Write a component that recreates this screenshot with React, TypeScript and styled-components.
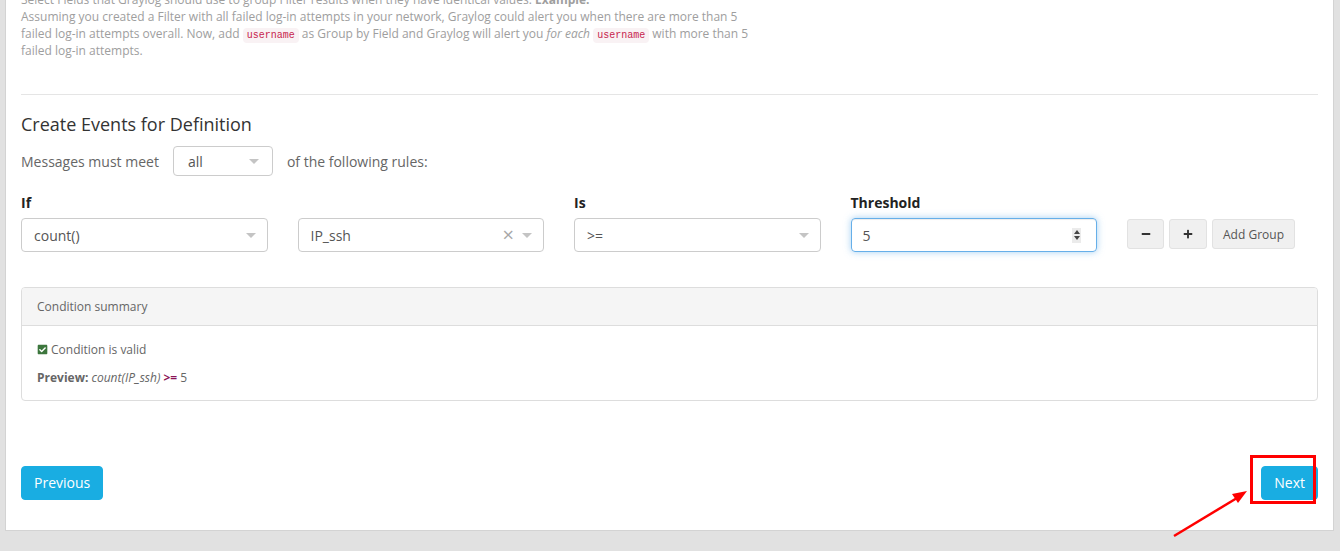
import React from "react";
import styled, { createGlobalStyle } from "styled-components";
import { FaMinus, FaPlus, FaCheckSquare } from "react-icons/fa";

const GlobalStyle = createGlobalStyle`
  html, body { margin: 0; padding: 0; }
  body {
    background: #e1e1e1;
    font-family: "Open Sans", "DejaVu Sans", sans-serif;
    overflow: hidden;
  }
`;

const Page = styled.div`
  padding: 0 6px 20px 5px;
`;

const Panel = styled.div`
  display: flex;
  flex-direction: column;
  background: #fff;
  border: 1px solid #d3d3d3;
  border-top: none;
  padding: 0 15px 30px;
`;

const HelpText = styled.p`
  margin: -9px 0 0;
  width: 745px;
  font-size: 12px;
  line-height: 17px;
  color: #9e9e9e;
`;

const Code = styled.code`
  font-family: "Liberation Mono", "DejaVu Sans Mono", monospace;
  font-size: 10px;
  line-height: 1;
  color: #c7254e;
  background: #f9f2f4;
  padding: 2px 4px;
  border-radius: 4px;
`;

const Divider = styled.div`
  margin-top: 35px;
  border-top: 1px solid #e5e5e5;
`;

const Heading = styled.h3`
  margin: 19px 0 0;
  font-size: 18px;
  font-weight: 400;
  line-height: 20px;
  color: #333;
`;

const MessagesRow = styled.div`
  display: flex;
  align-items: center;
  gap: 14px;
  margin-top: 12px;
  height: 30px;
  font-size: 14px;
  color: #666;
`;

const SmallSelect = styled.div`
  box-sizing: border-box;
  width: 100px;
  height: 30px;
  border: 1px solid #ccc;
  border-radius: 4px;
  padding: 0 13px 0 14px;
  display: flex;
  align-items: center;
  justify-content: space-between;
  font-size: 14px;
  color: #555;
`;

const Caret = styled.span`
  width: 0;
  height: 0;
  border-top: 5px solid #c4c4c4;
  border-left: 5px solid transparent;
  border-right: 5px solid transparent;
`;

const FieldsGrid = styled.div`
  display: grid;
  grid-template-columns: repeat(4, 246.5px) auto;
  column-gap: 30px;
  margin-top: 17px;
`;

const Field = styled.div`
  display: flex;
  flex-direction: column;
`;

const Label = styled.label`
  height: 20px;
  line-height: 20px;
  margin-bottom: 5px;
  font-size: 14px;
  font-weight: 700;
  color: #222;
`;

const SelectBox = styled.div`
  box-sizing: border-box;
  height: 34px;
  border: 1px solid #ccc;
  border-radius: 4px;
  padding: 0 11px 0 12px;
  display: flex;
  align-items: center;
  justify-content: space-between;
  font-size: 14px;
  color: #555;
`;

const Indicators = styled.div`
  display: flex;
  align-items: center;
  gap: 8px;
`;

const Clear = styled.span`
  font-size: 20px;
  line-height: 18px;
  color: #a8a8a8;
`;

const NumberInput = styled.div`
  box-sizing: border-box;
  height: 34px;
  border: 1px solid #66afe9;
  border-radius: 4px;
  box-shadow: inset 0 1px 1px rgba(0, 0, 0, 0.075), 0 0 7px rgba(102, 175, 233, 0.6);
  padding: 0 15px 0 11px;
  display: flex;
  align-items: center;
  justify-content: space-between;
  font-size: 14px;
  color: #555;
`;

const Spinner = styled.span`
  width: 9px;
  height: 15px;
  background: #ebebeb;
  display: flex;
  flex-direction: column;
  align-items: center;
  justify-content: center;
  gap: 2px;
`;

const SpinArrow = styled.span<{ $up?: boolean }>`
  width: 0;
  height: 0;
  border-left: 3.5px solid transparent;
  border-right: 3.5px solid transparent;
  ${(p) => (p.$up ? "border-bottom: 4px solid #444;" : "border-top: 4px solid #444;")}
`;

const ButtonRow = styled.div`
  display: flex;
  gap: 5px;
  margin-top: 1px;
`;

const ToolButton = styled.button<{ $w: number }>`
  box-sizing: border-box;
  width: ${(p) => p.$w}px;
  height: 30px;
  padding: 0;
  background: #f0f0f0;
  border: 1px solid #e2e2e2;
  border-radius: 3px;
  font-family: "Open Sans", sans-serif;
  font-size: 12px;
  display: flex;
  align-items: center;
  justify-content: center;
  color: #333;
`;

const ButtonText = styled.span`
  color: #555;
`;

const Summary = styled.div`
  margin-top: 35px;
  border: 1px solid #ddd;
  border-radius: 4px;
`;

const SummaryHeader = styled.div`
  background: #f5f5f5;
  border-bottom: 1px solid #ddd;
  border-radius: 3px 3px 0 0;
  padding: 10px 15px;
  font-size: 12px;
  line-height: 17px;
  color: #666;
`;

const SummaryBody = styled.div`
  padding: 15px 15px 14px;
  font-size: 12px;
  line-height: 17px;
  color: #666;
`;

const ValidLine = styled.p`
  margin: 0 0 11px;
  display: flex;
  align-items: center;
  gap: 3px;
  color: #666;
`;

const PreviewLine = styled.p`
  margin: 0;
`;

const Op = styled.span`
  color: #8c1457;
  font-weight: 700;
`;

const Footer = styled.div`
  margin-top: 65px;
  display: flex;
  justify-content: space-between;
  align-items: flex-start;
`;

const PrimaryButton = styled.button`
  box-sizing: border-box;
  height: 34px;
  padding: 6px 12px;
  background: #19ade2;
  border: 1px solid #19ade2;
  border-radius: 4px;
  color: #fff;
  font-family: "Open Sans", sans-serif;
  font-size: 14px;
  line-height: 20px;
`;

const NextWrap = styled.div`
  position: relative;
`;

const Annotation = styled.svg`
  position: absolute;
  left: -100px;
  top: -20px;
  overflow: visible;
  pointer-events: none;
`;

export default function App() {
  return (
    <>
      <GlobalStyle />
      <Page>
        <Panel>
          <HelpText>
            Select Fields that Graylog should use to group Filter results when they have identical values.{" "}
            <b>Example:</b>
            <br />
            Assuming you created a Filter with all failed log-in attempts in your network, Graylog could alert you
            when there are more than 5 failed log-in attempts overall. Now, add <Code>username</Code> as Group by
            Field and Graylog will alert you <em>for each</em> <Code>username</Code> with more than 5 failed log-in
            attempts.
          </HelpText>
          <Divider />
          <Heading>Create Events for Definition</Heading>
          <MessagesRow>
            <span>Messages must meet</span>
            <SmallSelect>
              <span>all</span>
              <Caret />
            </SmallSelect>
            <span>of the following rules:</span>
          </MessagesRow>
          <FieldsGrid>
            <Field>
              <Label>If</Label>
              <SelectBox>
                <span>count()</span>
                <Caret />
              </SelectBox>
            </Field>
            <Field>
              <Label />
              <SelectBox>
                <span>IP_ssh</span>
                <Indicators>
                  <Clear>×</Clear>
                  <Caret />
                </Indicators>
              </SelectBox>
            </Field>
            <Field>
              <Label>Is</Label>
              <SelectBox>
                <span>&gt;=</span>
                <Caret />
              </SelectBox>
            </Field>
            <Field>
              <Label>Threshold</Label>
              <NumberInput>
                <span>5</span>
                <Spinner>
                  <SpinArrow $up />
                  <SpinArrow />
                </Spinner>
              </NumberInput>
            </Field>
            <Field>
              <Label />
              <ButtonRow>
                <ToolButton $w={37}>
                  <FaMinus size={10} />
                </ToolButton>
                <ToolButton $w={38}>
                  <FaPlus size={10} />
                </ToolButton>
                <ToolButton $w={83}>
                  <ButtonText>Add Group</ButtonText>
                </ToolButton>
              </ButtonRow>
            </Field>
          </FieldsGrid>
          <Summary>
            <SummaryHeader>Condition summary</SummaryHeader>
            <SummaryBody>
              <ValidLine>
                <FaCheckSquare size={11} color="#3c763d" />
                Condition is valid
              </ValidLine>
              <PreviewLine>
                <b>Preview:</b> <em>count(IP_ssh)</em> <Op>&gt;=</Op> 5
              </PreviewLine>
            </SummaryBody>
          </Summary>
          <Footer>
            <PrimaryButton>Previous</PrimaryButton>
            <NextWrap>
              <PrimaryButton>Next</PrimaryButton>
              <Annotation width="170" height="100" viewBox="0 0 170 100">
                <rect x="90.5" y="10.5" width="63" height="46" fill="none" stroke="#ff0000" strokeWidth="3" />
                <line x1="13" y1="90" x2="76" y2="52" stroke="#ff0000" strokeWidth="2.5" />
                <polygon points="86,45 77,57 71,48" fill="#ff0000" />
              </Annotation>
            </NextWrap>
          </Footer>
        </Panel>
      </Page>
    </>
  );
}
